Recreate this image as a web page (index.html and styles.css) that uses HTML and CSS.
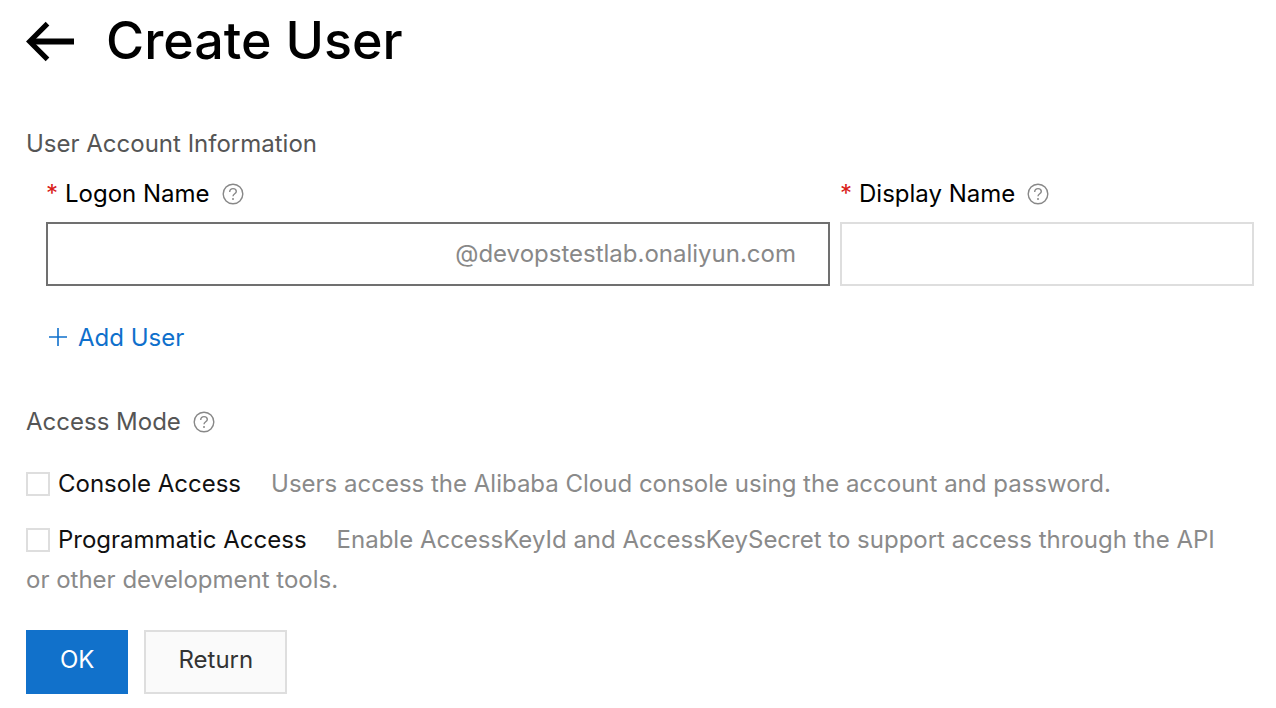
FILE: index.html
```html
<!DOCTYPE html>
<html lang="en">
<head>
<meta charset="utf-8">
<title>Create User</title>
<link rel="stylesheet" href="styles.css">
</head>
<body>
<svg class="defs" aria-hidden="true">
  <symbol id="help" viewBox="0 0 22 22">
    <circle cx="11" cy="11" r="9.8" fill="none" stroke="currentColor" stroke-width="1.4"/>
    <path d="M7.7 8.9C7.7 6.8 9.1 5.6 11 5.6s3.3 1.2 3.3 2.9c0 2.2-3.3 2.4-3.3 4.8" fill="none" stroke="currentColor" stroke-width="1.4"/>
    <circle cx="11" cy="16" r="1" fill="currentColor"/>
  </symbol>
</svg>
<form class="page">
  <header class="header">
    <button type="button" class="back" aria-label="Back">
      <svg width="50" height="42" viewBox="0 0 50 42"><path d="M21.5 3.7 3.7 21.5l17.8 17.8" fill="none" stroke="#000" stroke-width="5.2"/><path d="M5 21.5h43" stroke="#000" stroke-width="6"/></svg>
    </button>
    <h1 class="title">Create User</h1>
  </header>
  <h2 class="section-title">User Account Information</h2>
  <div class="account">
    <div class="field">
      <label class="label" for="logon"><span class="required">*</span>Logon Name<svg class="help"><use href="#help"/></svg></label>
      <div class="box box-active"><input class="input" id="logon" type="text"><span class="suffix">@devopstestlab.onaliyun.com</span></div>
    </div>
    <div class="field">
      <label class="label" for="display"><span class="required">*</span>Display Name<svg class="help"><use href="#help"/></svg></label>
      <div class="box"><input class="input" id="display" type="text"></div>
    </div>
  </div>
  <button type="button" class="add"><svg width="20" height="20" viewBox="0 0 20 20"><path d="M10 0v18M1 9h18" stroke="currentColor" stroke-width="1.6"/></svg>Add User</button>
  <h2 class="section-title mode-title">Access Mode<svg class="help"><use href="#help"/></svg></h2>
  <div class="option"><input class="check" type="checkbox" id="console"><label class="option-label" for="console">Console Access</label><span class="hint">Users access the Alibaba Cloud console using the account and password.</span></div>
  <div class="option"><input class="check" type="checkbox" id="program"><label class="option-label" for="program">Programmatic Access</label><span class="hint">Enable AccessKeyId and AccessKeySecret to support access through the API or other development tools.</span></div>
  <div class="actions">
    <button type="submit" class="button primary">OK</button>
    <button type="button" class="button">Return</button>
  </div>
</form>
</body>
</html>
```
FILE: styles.css
```css
* { box-sizing: border-box; }
body { margin: 0; background: #fff; color: #000; font: 400 24px/40px Inter, "Liberation Sans", sans-serif; }
button, input { font: inherit; }
svg { flex: none; }
.defs { position: absolute; width: 0; height: 0; }
.page { padding: 9px 22px 14px 26px; }
.header { display: flex; align-items: center; gap: 30px; }
.back { display: flex; padding: 0; border: 0; background: none; }
.title { margin: 0; font-size: 52px; font-weight: 500; line-height: 64px; }
.section-title { display: flex; align-items: center; margin: 51px 0 0; color: #555; font-size: 24px; font-weight: inherit; }
.help { width: 22px; height: 22px; margin-left: 12px; color: #888; }
.account { display: grid; grid-template-columns: 784fr 414fr; gap: 10px; margin: 10px 0 0 20px; }
.field { min-width: 0; }
.label { display: flex; align-items: center; }
.required { width: 19px; color: #d9201a; }
.box { display: flex; align-items: center; height: 64px; margin-top: 8px; padding: 0 32px 0 16px; border: 2px solid #dedede; }
.box-active { border-color: #707070; }
.input { flex: 1; min-width: 0; border: 0; outline: 0; background: none; }
.suffix { color: #888; }
.add { display: flex; align-items: center; gap: 10px; margin: 32px 0 0 22px; padding: 0; border: 0; background: none; color: #0f70cc; }
.mode-title { margin: 44px 0 22px; }
.option { margin-bottom: 16px; padding-right: 24px; }
.check { appearance: none; width: 24px; height: 24px; margin: 0 8px 0 0; border: 2px solid #dedede; background: #fff; vertical-align: -4px; }
.option-label { color: #111; }
.hint { margin-left: 30px; color: #8a8a8a; }
.actions { display: flex; gap: 16px; margin-top: 30px; }
.button { height: 64px; padding: 0 32px 4px; border: 2px solid #dedede; background: #fafafa; color: #333; }
.primary { border-color: #1171cb; background: #1171cb; color: #fff; }
```
